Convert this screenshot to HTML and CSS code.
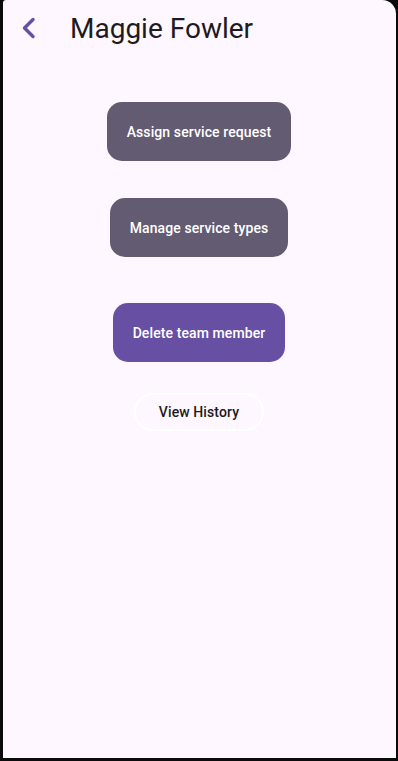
FILE: index.html
```html
<!doctype html>
<html>
  <head>
    <title>Maggie Fowler</title>
    <link rel="stylesheet" href="styles.css">
  </head>
  <body>
    <div class="screen">
      <div class="app-bar">
        <button class="back-btn" aria-label="Back">
          <svg width="16" height="24" viewBox="0 0 16 24">
            <path d="M12 3.5 L3.5 12 L12 20.5" fill="none" stroke="#6750a4" stroke-width="3.4" stroke-linecap="round" stroke-linejoin="round"/>
          </svg>
        </button>
        <h1 class="title">Maggie Fowler</h1>
      </div>

      <div class="actions">
        <button class="action tonal first">Assign service request</button>
        <button class="action tonal second">Manage service types</button>
        <button class="action primary third">Delete team member</button>
        <button class="outline-btn">View History</button>
      </div>
    </div>
  </body>
</html>
```

FILE: styles.css
```css
html, body {
  margin: 0;
  padding: 0;
  height: 100%;
}

body {
  background: #0b0b0b;
  font-family: Roboto, "Noto Sans", Arial, sans-serif;
  display: flex;
}

.screen {
  flex: 1;
  margin: 0 2px 3px 3px;
  background: #fef7ff;
  border-top-right-radius: 14px;
  border-top-left-radius: 3px;
  box-sizing: border-box;
}

.app-bar {
  display: flex;
  align-items: center;
  height: 56px;
  padding-left: 18px;
}

.back-btn {
  border: none;
  background: none;
  padding: 0;
  width: 49px;
  height: 24px;
  display: flex;
  align-items: center;
  cursor: pointer;
}

.title {
  margin: 0;
  font-size: 28px;
  font-weight: 400;
  color: #1d1b20;
  letter-spacing: 0;
}

.actions {
  display: flex;
  flex-direction: column;
  align-items: center;
  padding-top: 46px;
  margin-right: 1px;
}

.action {
  border: none;
  color: #fff;
  font-family: inherit;
  font-size: 14px;
  font-weight: 500;
  height: 59px;
  padding: 0 20px;
  border-radius: 15px;
  letter-spacing: 0.1px;
}

.tonal {
  background: #625b71;
}

.primary {
  background: #6750a4;
}

.second {
  margin-top: 37px;
}

.third {
  margin-top: 46px;
}

.outline-btn {
  margin-top: 31px;
  height: 38px;
  padding: 0 23px;
  border: 2px solid #fff;
  border-radius: 20px;
  background: transparent;
  color: #1d1b20;
  font-family: inherit;
  font-size: 14px;
  font-weight: 500;
  letter-spacing: 0.1px;
}
```
